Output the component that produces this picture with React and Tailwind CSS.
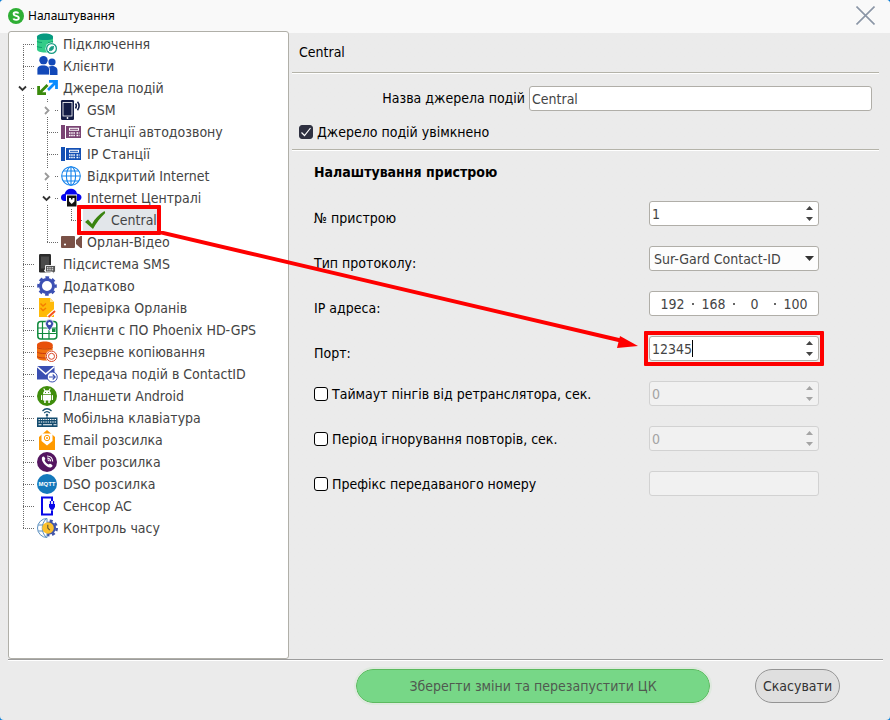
import React, { useState } from 'react';

const DatabaseIcon = () => (
  <>
    <path d="M0 3v12.500c0 1.700 3.500 3 8 3s8-1.300 8-3V3z" fill="#33cc88" />
    <path d="M0 7.500q2 1 5 1M0 12.500q2 1 5 1M11 8.500q3 0 5-1" fill="none" stroke="#12a06e" strokeWidth="1.200" />
    <path d="M0 2.500C0 1 3.500-.5 8-.5s8 1.500 8 3v2C14 6.500 2 6.500 0 4.500z" fill="#079a80" />
    <circle cx="14.500" cy="14.500" r="6" fill="#fff" />
    <circle cx="14.500" cy="14.500" r="4.900" fill="#fff" stroke="#1a9c84" strokeWidth="1.300" />
    <path d="M12.500 16.500c-.8-2.500 1.500-4.500 4-4 .5 2.500-1.500 4.800-4 4zM11 18l6-6" fill="#1a9c84" stroke="#1a9c84" strokeWidth=".8" />
  </>
);

const UsersIcon = () => (
  <g fill="#1248b8">
    <circle cx="15" cy="6" r="3.600" />
    <path d="M10 19v-5c0-2.500 2-4 5-4s5.500 1.500 5.500 4.500V19z" />
    <circle cx="6.500" cy="4.300" r="4.200" />
    <path d="M0 19v-5.500C0 10.500 2.500 9 6 9s6.500 1.500 6.500 4.500V19z" stroke="#fff" strokeWidth=".8" />
  </g>
);

const ArrowsIcon = () => (
  <g fill="none" strokeWidth="2.800">
    <path d="M11 12l8-8M12 3.400h7.500v7.500" stroke="#0a8cff" />
    <path d="M10.500 7L2 15.500M1.600 8v7.600H9" stroke="#3a8a0c" />
  </g>
);

const PhoneSignalIcon = () => (
  <>
    <rect x="0" y="0" width="13" height="20" rx="1.200" fill="#131c46" />
    <rect x="2" y="2.500" width="9" height="13.500" fill="#131c46" stroke="#fff" strokeWidth=".8" />
    <circle cx="6.500" cy="18" r=".9" fill="#fff" />
    <path d="M14.500 3.500q1.800 2 0 5M16.500 1.800q3.200 4 0 8.500" fill="none" stroke="#131c46" strokeWidth="1.500" />
  </>
);

const DeskPhoneIcon = ({ color }) => (
  <>
    <path d="M0 3h4v14H0zM5 4H20v12H5z" fill={color} />
    <path d="M8 5.800h10v3H8z" fill="#fff" />
    <path d="M9 7.300h8" stroke={color} />
    <path d="M8 11h6M8 13.500h6M15.500 11h3M15.500 13.500h3" stroke="#fff" strokeWidth="1.300" strokeDasharray="1.500 .7" />
  </>
);

const GlobeIcon = () => (
  <g fill="none" stroke="#1684ec" strokeWidth="1.100">
    <circle cx="10" cy="10" r="9.300" />
    <ellipse cx="10" cy="10" rx="4.600" ry="9.300" />
    <path d="M10 .7v18.600M.7 10h18.600M2.500 5h15M2.500 15h15" />
  </g>
);

const CloudIcon = () => (
  <>
    <path d="M3.500 13a3.400 3.400 0 0 1 0-7C4.500 2.500 7 .8 10 .8s5.500 2 6 4.700c2.500.2 4.500 1.700 4.500 3.800S18.500 13 16.500 13z" fill="#0505ee" />
    <rect x="5" y="6.500" width="11" height="12.500" fill="#fff" />
    <rect x="6" y="7.500" width="9.500" height="11" fill="#111" />
    <path d="M8 10h5.500v3.200L10.700 16 8 13.200z" fill="#fff" />
    <path d="M10 10h1.500v1.500H10z" fill="#111" />
  </>
);

const CheckIcon = () => (
  <path d="M0 12L3 9.500l4 4.500C9.500 9 14 4.500 19.500 1 20 2 20.300 2.500 20 3.200 15.500 7.500 11 13 8 19z" fill="#3a8410" />
);

const CameraIcon = () => (
  <>
    <rect x="0" y="4" width="14" height="12" rx="1" fill="#7a5147" />
    <circle cx="4" cy="12.500" r="1.100" fill="#fff" />
    <path d="M15 8l4.500-4H21v12h-1.500L15 12z" fill="#7a5147" />
  </>
);

const SmsIcon = () => (
  <>
    <rect x="2" y="0" width="12" height="18.500" rx="1.300" fill="#2b2b2b" />
    <path d="M4 2.500h8v12H4z" fill="#4b4b4b" />
    <circle cx="8" cy="16.500" r=".9" fill="#fff" />
    <path d="M8.500 11.500h10v6.500h-1v2l-2-2h-7z" fill="#555" stroke="#fff" strokeWidth=".9" />
    <path d="M10 13.800h7M10 15.800h7" stroke="#fff" strokeDasharray="1.500 .8" />
  </>
);

const GearIcon = () => (
  <>
    <circle cx="10" cy="10" r="6.500" fill="none" stroke="#3c50b4" strokeWidth="3" />
    <circle cx="10" cy="10" r="8.500" fill="none" stroke="#3c50b4" strokeWidth="2.600" strokeDasharray="3.600 3.076" strokeDashoffset="1.800" />
  </>
);

const ChecklistIcon = () => (
  <>
    <path d="M2 0h11l4 4v15H2z" fill="#ffba08" />
    <path d="M13 0v4h4z" fill="#ffe08a" />
    <path d="M3.500 5.500l2.500 2.500 3-2.500M3.500 10l2.500 2.500 3-2.500" fill="none" stroke="#f57c00" strokeWidth="1.400" />
    <path d="M11 19l7.500-6.500" stroke="#fff" strokeWidth="4" />
    <path d="M11.500 19l6.500-6" stroke="#f4511e" strokeWidth="2" />
  </>
);

const MapIcon = () => (
  <>
    <rect x=".8" y="1.500" width="19" height="17.500" rx="3" fill="#fff" stroke="#108a3c" strokeWidth="1.500" />
    <path d="M5.500 1.500V19M1 8h18.500M1 13.500h18.500M12 10v9" stroke="#108a3c" strokeWidth="1.200" />
    <path d="M15 8.500h3.500V12H15z" fill="#108a3c" />
    <path d="M12.500-.5a4 4 0 0 1 4 4c0 3-4 7-4 7s-4-4-4-7a4 4 0 0 1 4-4z" fill="#3949ab" stroke="#fff" strokeWidth=".7" />
    <circle cx="12.500" cy="3.500" r="1.600" fill="#fff" />
  </>
);

const BackupIcon = () => (
  <>
    <path d="M0 3v12.500c0 1.700 3.500 3 7.800 3s7.800-1.300 7.800-3V3z" fill="#f07010" />
    <path d="M0 2.500C0 1 3.500-.5 7.800-.5s7.800 1.500 7.800 3v2C13.600 6.500 2 6.500 0 4.500z" fill="#e8500c" />
    <path d="M0 5.500c2 2 13.600 2 15.600 0M0 10c2 2 13.600 2 15.600 0M0 14.500c2 2 13.600 2 15.600 0" fill="none" stroke="#c83a10" />
    <circle cx="14.500" cy="14.300" r="6" fill="#fff" />
    <circle cx="14.500" cy="14.300" r="5.200" fill="none" stroke="#d8482a" />
    <circle cx="14.500" cy="14.300" r="3" fill="none" stroke="#d8482a" />
  </>
);

const MailForwardIcon = () => (
  <>
    <path d="M0 2h17.500v13.500H0z" fill="#3a4fb2" />
    <path d="M0 2.500l8.700 7.500 8.800-7.500" fill="none" stroke="#fff" strokeWidth="1.600" />
    <circle cx="15.200" cy="13" r="5" fill="#fff" stroke="#3a4fb2" />
    <path d="M12 13h6M15.700 10.500l2.500 2.500-2.500 2.500" fill="none" stroke="#3a4fb2" strokeWidth="1.100" />
  </>
);

const AndroidIcon = () => (
  <>
    <circle cx="10" cy="10" r="10" fill="#3f8d0c" />
    <path d="M6 8.200a4 4 0 0 1 8 0zM6 9h8v5.500h-1.200V17h-1.500v-2.500H8.700V17H7.200v-2.500H6z" fill="#fff" />
    <path d="M7 3l1.200 2M13 3l-1.200 2M4.600 9.500v4M15.400 9.500v4" stroke="#fff" strokeWidth="1.200" strokeLinecap="round" />
    <path d="M8 6.500h.9M11.200 6.500h.9" stroke="#3f8d0c" />
  </>
);

const KeyboardIcon = () => (
  <>
    <path d="M5.500 3Q10-1.500 14.500 3M7.200 5Q10 2.200 12.800 5" fill="none" stroke="#134b6e" strokeWidth="1.200" />
    <path d="M10 5.500l1.500 1.500L10 8.500 8.500 7zM9.500 8h1v2h-1z" fill="#134b6e" />
    <path d="M0 9.500h20.500V19H0z" fill="#134b6e" />
    <path d="M1.500 11.500h18M1.500 14h18" stroke="#fff" strokeWidth="1.200" strokeDasharray="1.400 .9" />
    <path d="M1.500 16.700h3M6 16.700h9M16.500 16.700h3" stroke="#fff" strokeWidth="1.100" />
  </>
);

const EmailIcon = () => (
  <>
    <path d="M2 7l8-7 8 7v13H2z" fill="#ff9a00" />
    <path d="M4.500 3.500h11V11L10 15.500 4.500 11z" fill="#fff" />
    <circle cx="10" cy="8" r="2.700" fill="none" stroke="#ff9a00" />
    <circle cx="10" cy="8" r="1" fill="#ff9a00" />
  </>
);

const ViberIcon = () => (
  <>
    <circle cx="10" cy="10" r="10" fill="#541560" />
    <path d="M5 5.500c1-1.500 2-1.200 2.700 0 .8 1.300.8 1.700-.2 2.600.7 2.300 2 3.600 4.200 4.500.9-1.200 1.500-1.200 2.900-.2 1.300.9 1.200 1.700 0 2.600C11.500 17.500 3.500 10 5 5.500z" fill="#fff" />
    <path d="M10 4c3.300 0 5.500 2 5.700 5.500M10.200 6c2.200.2 3.300 1.300 3.500 3.400M10.500 7.800c1 .1 1.500.6 1.600 1.500" fill="none" stroke="#fff" strokeWidth="1.100" />
  </>
);

const MqttIcon = () => (
  <>
    <circle cx="10" cy="10" r="10" fill="#1479bc" />
    <text x="10" y="12" textAnchor="middle" fontSize="6" fontWeight="700" fontFamily="Liberation Sans, sans-serif" fill="#fff">MQTT</text>
  </>
);

const SensorIcon = () => (
  <>
    <path d="M15 5V1.500H5v17h10V15" fill="none" stroke="#0808e8" strokeWidth="2" />
    <path d="M12 8h6v3l-1.500 2.500h-3L12 11z" fill="#0808e8" />
    <path d="M13.500 5v4M16.500 5v4M15 13v3" stroke="#0808e8" strokeWidth="1.300" />
  </>
);

const TimeIcon = () => (
  <>
    <circle cx="12.500" cy="10" r="6.500" fill="#4054a8" />
    <circle cx="12.500" cy="10" r="7.300" fill="none" stroke="#4054a8" strokeWidth="2.400" strokeDasharray="3 2.733" />
    <path d="M10 .5a9.500 9.500 0 0 0 0 19z" fill="#fff" stroke="#5a8fc0" />
    <path d="M9 1C4 6 4 14 9 19M1.200 7H8M1.200 13H8" fill="none" stroke="#5a8fc0" />
    <circle cx="11" cy="10" r="5.800" fill="#fbc02d" />
    <path d="M10.800 6.800V10l2 2.200" fill="none" stroke="#5a5130" strokeWidth="1.100" />
  </>
);

// guides: v - line passes through, t - branch, l - last branch, f - first branch
const treeItems = [
  { label: 'Підключення', icon: <DatabaseIcon />, guides: 'f' },
  { label: 'Клієнти', icon: <UsersIcon />, guides: 't' },
  { label: 'Джерела подій', icon: <ArrowsIcon />, guides: 't', toggle: 'open' },
  { label: 'GSM', icon: <PhoneSignalIcon />, guides: 'vt', toggle: 'closed' },
  { label: 'Станції автодозвону', icon: <DeskPhoneIcon color="#7a4474" />, guides: 'vt' },
  { label: 'IP Станції', icon: <DeskPhoneIcon color="#1450b4" />, guides: 'vt' },
  { label: 'Відкритий Internet', icon: <GlobeIcon />, guides: 'vt', toggle: 'closed' },
  { label: 'Internet Централі', icon: <CloudIcon />, guides: 'vt', toggle: 'open' },
  { label: 'Central', icon: <CheckIcon />, guides: 'vvl' },
  { label: 'Орлан-Відео', icon: <CameraIcon />, guides: 'vl' },
  { label: 'Підсистема SMS', icon: <SmsIcon />, guides: 't' },
  { label: 'Додатково', icon: <GearIcon />, guides: 't' },
  { label: 'Перевірка Орланів', icon: <ChecklistIcon />, guides: 't' },
  { label: 'Клієнти с ПО Phoenix HD-GPS', icon: <MapIcon />, guides: 't' },
  { label: 'Резервне копіювання', icon: <BackupIcon />, guides: 't' },
  { label: 'Передача подій в ContactID', icon: <MailForwardIcon />, guides: 't' },
  { label: 'Планшети Android', icon: <AndroidIcon />, guides: 't' },
  { label: 'Мобільна клавіатура', icon: <KeyboardIcon />, guides: 't' },
  { label: 'Email розсилка', icon: <EmailIcon />, guides: 't' },
  { label: 'Viber розсилка', icon: <ViberIcon />, guides: 't' },
  { label: 'DSO розсилка', icon: <MqttIcon />, guides: 't' },
  { label: 'Сенсор АС', icon: <SensorIcon />, guides: 't' },
  { label: 'Контроль часу', icon: <TimeIcon />, guides: 'l' },
];

const Guide = ({ kind, toggle }) => {
  const from = kind === 'f' ? 11 : 0;
  const to = kind === 'l' ? 11 : 22;
  return (
    <svg width="24" height="22" viewBox="0 0 24 22" className="shrink-0" fill="none">
      <g stroke="#6a6a6a" strokeDasharray="1 1">
        {toggle ? (
          <path d="M12.500 0V4M12.500 18V22M20 11.500H25" />
        ) : (
          <path d={`M12.500 ${from}V${to}${kind === 'v' ? '' : 'M12 11.500H25'}`} />
        )}
      </g>
      {toggle === 'open' && <path d="M8 9.500l3.500 3.500L15 9.500" stroke="#333" strokeWidth="1.800" />}
      {toggle === 'closed' && <path d="M10 8l3.500 3.500L10 15" stroke="#999" strokeWidth="1.800" />}
    </svg>
  );
};

const TreeItem = ({ item, selected, onSelect }) => (
  <li className="flex h-[22px] items-center">
    {item.guides.split('').map((kind, index) => (
      <Guide
        key={index}
        kind={kind}
        toggle={index === item.guides.length - 1 ? item.toggle : undefined}
      />
    ))}
    <button
      type="button"
      onClick={onSelect}
      className={`relative flex h-[22px] items-center gap-[6px] pl-[2px] ${selected ? 'bg-[#e2e6ea]' : ''}`}
    >
      <svg width="20" height="20" viewBox="0 0 20 20" className="shrink-0 overflow-visible">
        {item.icon}
      </svg>
      <span className="whitespace-nowrap">{item.label}</span>
      {selected && (
        <span className="pointer-events-none absolute -inset-y-1 -left-[6px] -right-1 rounded-[1px] border-4 border-[#fe0000]"></span>
      )}
    </button>
  </li>
);

const Field = ({ id, label, optional, children }) => (
  <div className="flex h-[45px] items-start">
    {optional ? (
      <label className="flex h-[25px] w-[335px] items-center gap-1">
        <input
          type="checkbox"
          className="size-[14px] appearance-none rounded-[3px] border border-black bg-white"
        />
        {label}
      </label>
    ) : (
      <label htmlFor={id} className="w-[335px] leading-[34px]">{label}</label>
    )}
    {children}
  </div>
);

const SpinBox = ({ id, label, value, onChange, disabled, caret, highlighted }) => (
  <div
    className={`relative flex h-[25px] w-[170px] items-center rounded-[3px] border ${
      disabled ? 'border-[#d2d2d2] bg-[#f1f1f1] text-[#a4a4a4]' : 'border-[#b0aea8] bg-white text-[#444]'
    }`}
  >
    <input
      id={id}
      aria-label={label}
      inputMode="numeric"
      value={value}
      disabled={disabled}
      onChange={(e) => onChange(e.target.value)}
      className="h-full min-w-0 flex-1 bg-transparent pl-[2px] outline-none"
    />
    {caret && <span className="absolute left-[42px] top-[3px] h-[17px] w-px bg-black"></span>}
    <div className="flex h-full w-[18px] flex-col items-center justify-between py-1">
      <button type="button" aria-label="+" disabled={disabled} onClick={() => onChange(String(Number(value) + 1))}>
        <svg width="7" height="4" viewBox="0 0 7 4" fill="currentColor"><path d="M0 4l3.500-4L7 4z" /></svg>
      </button>
      <button type="button" aria-label="-" disabled={disabled} onClick={() => onChange(String(Number(value) - 1))}>
        <svg width="7" height="4" viewBox="0 0 7 4" fill="currentColor"><path d="M0 0l3.500 4L7 0z" /></svg>
      </button>
    </div>
    {highlighted && (
      <span className="pointer-events-none absolute -inset-x-[6px] -inset-y-[6px] rounded-[1px] border-4 border-[#fe0000]"></span>
    )}
  </div>
);

const Separator = () => <div className="h-[2px] border-t border-[#b4b3a9] bg-white"></div>;

const App = () => {
  const [selected, setSelected] = useState('Central');
  const [name, setName] = useState('Central');
  const [enabled, setEnabled] = useState(true);
  const [device, setDevice] = useState('1');
  const [protocol, setProtocol] = useState('Sur-Gard Contact-ID');
  const [ip, setIp] = useState(['192', '168', '0', '100']);
  const [port, setPort] = useState('12345');

  const handleIpChange = (index, value) => {
    setIp(ip.map((part, i) => (i === index ? value : part)));
  };

  return (
    <div className="bg-[#0a7fd8]">
      <div className="relative flex min-h-screen flex-col overflow-hidden rounded-[4px] bg-[#ebebeb] font-['DejaVu_Sans_Condensed','Noto_Sans',sans-serif] text-[14px] leading-[22px] text-black">
        {/* Title bar */}
        <header className="flex h-[31px] items-center gap-1 bg-[#f9f9f9] px-2">
          <svg width="16" height="16" viewBox="0 0 16 16">
            <circle cx="8" cy="8" r="8" fill="#2eae34" />
            <path d="M10.500 5.500C9.800 3.800 5.600 3.800 5.600 6c0 2.400 5.200 1.400 5.200 4 0 2.400-4.800 2.400-5.400.4" fill="none" stroke="#fff" strokeWidth="1.900" />
          </svg>
          <h1 className="flex-1 font-['Noto_Sans',sans-serif] text-[12px]">Налаштування</h1>
          <button type="button" aria-label="Закрити" className="px-[7px]">
            <svg width="19" height="19" viewBox="0 0 19 19" fill="none" stroke="#8b96a6" strokeWidth="1.600">
              <path d="M.5.5l18 18M18.500.5l-18 18" />
            </svg>
          </button>
        </header>

        <main className="flex flex-1 bg-linear-to-b from-[#f9f9f9] from-[2px] to-[#ebebeb] to-[2px] pl-2">
          {/* Navigation tree */}
          <nav className="w-[281px] shrink-0 rounded-[3px] border border-[#b0afa8] bg-white pl-[2px] pt-px text-[#444]">
            <ul>
              {treeItems.map((item) => (
                <TreeItem
                  key={item.label}
                  item={item}
                  selected={item.label === selected}
                  onSelect={() => setSelected(item.label)}
                />
              ))}
            </ul>
          </nav>

          {/* Source settings */}
          <section className="min-w-0 flex-1 pl-[3px] pr-[11px]">
            <h2 className="h-[41px] pl-[7px] pt-[10px]">Central</h2>
            <Separator />
            <div className="flex h-[37px] items-end justify-end gap-1 pr-[7px]">
              <label htmlFor="source-name" className="leading-[25px]">Назва джерела подій</label>
              <input
                id="source-name"
                value={name}
                onChange={(e) => setName(e.target.value)}
                className="h-[25px] w-[343px] rounded-[3px] border border-[#b0aea8] bg-white px-[2px] text-[#444] outline-none"
              />
            </div>
            <label className="flex h-[38px] items-center gap-1 pl-[7px] pt-1">
              <span className="relative flex size-[14px]">
                <input
                  type="checkbox"
                  checked={enabled}
                  onChange={(e) => setEnabled(e.target.checked)}
                  className="size-[14px] appearance-none rounded-[3px] border border-[#2f3141] bg-white checked:bg-[#2f3141]"
                />
                {enabled && (
                  <svg width="14" height="14" viewBox="0 0 14 14" className="pointer-events-none absolute inset-0" fill="none" stroke="#fff" strokeWidth="1.200">
                    <path d="M2.500 7.500l3 3 6-7.500" />
                  </svg>
                )}
              </span>
              Джерело подій увімкнено
            </label>
            <Separator />

            <div className="pl-[22px] pt-[10px]">
              <h3 className="h-[40px] font-bold">Налаштування пристрою</h3>
              <Field id="device" label="№ пристрою">
                <SpinBox id="device" value={device} onChange={setDevice} />
              </Field>
              <Field id="protocol" label="Тип протоколу:">
                <div className="relative">
                  <select
                    id="protocol"
                    value={protocol}
                    onChange={(e) => setProtocol(e.target.value)}
                    className="block h-[25px] w-[170px] appearance-none rounded-[3px] border border-[#b0aea8] bg-[#fdfdfd] pl-1 text-[#444] outline-none"
                  >
                    <option>Sur-Gard Contact-ID</option>
                  </select>
                  <svg width="9" height="5" viewBox="0 0 9 5" className="pointer-events-none absolute right-[5px] top-[10px]" fill="#333">
                    <path d="M0 0h9L4.500 5z" />
                  </svg>
                </div>
              </Field>
              <Field id="ip-0" label="IP адреса:">
                <div className="flex h-[25px] w-[170px] items-center rounded-[3px] border border-[#b0aea8] bg-white pl-[3px] text-[#444]">
                  {ip.map((part, index) => (
                    <React.Fragment key={index}>
                      {index > 0 && <span className="size-[2px] bg-[#666]"></span>}
                      <input
                        id={`ip-${index}`}
                        value={part}
                        onChange={(e) => handleIpChange(index, e.target.value)}
                        className="w-[39px] min-w-0 bg-transparent text-center outline-none"
                      />
                    </React.Fragment>
                  ))}
                </div>
              </Field>
              <Field id="port" label="Порт:">
                <SpinBox id="port" value={port} onChange={setPort} caret highlighted />
              </Field>
              <Field label="Таймаут пінгів від ретранслятора, сек." optional>
                <SpinBox label="Таймаут пінгів" value="0" onChange={() => {}} disabled />
              </Field>
              <Field label="Період ігнорування повторів, сек." optional>
                <SpinBox label="Період ігнорування" value="0" onChange={() => {}} disabled />
              </Field>
              <Field label="Префікс передаваного номеру" optional>
                <input
                  aria-label="Префікс"
                  disabled
                  className="h-[25px] w-[170px] rounded-[3px] border border-[#d2d2d2] bg-[#f1f1f1] px-1"
                />
              </Field>
            </div>
          </section>
        </main>

        {/* Actions */}
        <footer className="pl-2 pr-[7px]">
          <div className="h-[2px] border-t border-[#9c9c9c] bg-white"></div>
          <div className="flex h-[59px] items-start justify-end gap-[45px] pr-[43px] pt-2">
            <button
              type="button"
              className="h-[34px] w-[354px] rounded-full border border-[#5cba5f] bg-[#77d787] text-[#505a50] outline-2 outline-[#dfe9df]"
            >
              Зберегти зміни та перезапустити ЦК
            </button>
            <button
              type="button"
              className="h-[34px] w-[85px] whitespace-nowrap rounded-full border border-[#949494] bg-[#dfdfdf] text-[#333]"
            >
              Скасувати
            </button>
          </div>
        </footer>

        {/* Pointer from the selected source to its port */}
        <svg width="480" height="120" viewBox="0 0 480 120" className="pointer-events-none absolute left-[159px] top-[231px]">
          <path d="M0 1l464 109" stroke="#fe0000" strokeWidth="4" />
          <path d="M479 115l-21 2 3-12z" fill="#fe0000" />
        </svg>
      </div>
    </div>
  );
};

export default App;
